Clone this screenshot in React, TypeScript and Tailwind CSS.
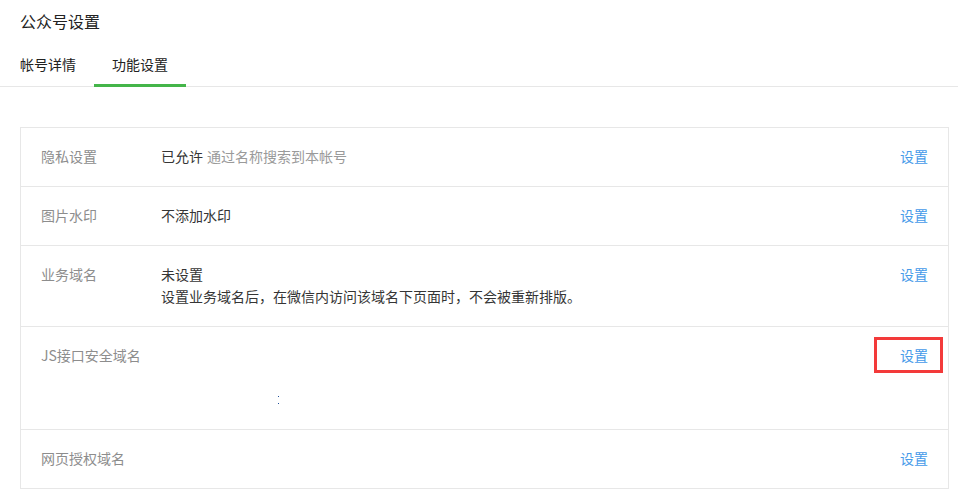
const rows = [
  { label: '隐私设置', key: 'privacy' },
  { label: '图片水印', key: 'watermark' },
  { label: '业务域名', key: 'domain' },
  { label: 'JS接口安全域名', key: 'js' },
  { label: '网页授权域名', key: 'oauth' },
];

function RowValue({ k }: { k: string }) {
  if (k === 'privacy') {
    return (
      <div>
        <span className="text-[#353535]">已允许</span>
        <span className="ml-1 text-[#9a9a9a]">通过名称搜索到本帐号</span>
      </div>
    );
  }
  if (k === 'watermark') {
    return <div className="text-[#353535]">不添加水印</div>;
  }
  if (k === 'domain') {
    return (
      <div className="text-[#353535]">
        <div>未设置</div>
        <div>设置业务域名后，在微信内访问该域名下页面时，不会被重新排版。</div>
      </div>
    );
  }
  if (k === 'js') {
    return (
      <div>
        <div className="h-[22px]" />
        <div className="ml-[117px] mt-[30px] h-px w-px bg-[#1f4f9a]" />
        <div className="ml-[117px] mt-[6px] mb-[6px] h-px w-px bg-[#1f4f9a]" />
      </div>
    );
  }
  return <div className="h-[22px]" />;
}

export default function App() {
  return (
    <div
      className="min-h-[497px] w-[958px] bg-white text-[14px] leading-[22px]"
      style={{ fontFamily: '"Microsoft YaHei", "Noto Sans CJK SC", sans-serif' }}
    >
      {/* page header */}
      <div className="px-[20px] pt-[10px] text-[16px] leading-[22px] text-[#222]">公众号设置</div>

      {/* tabs */}
      <div className="mt-[21px] flex border-b border-[#e7e7e7] pl-[2px]">
        <div className="px-[18px] pb-[11px] text-[#222]">帐号详情</div>
        <div className="-mb-px border-b-[3px] border-[#44b549] px-[18px] pb-[9px] text-[#222]">功能设置</div>
      </div>

      {/* settings list */}
      <div className="ml-[20px] mt-[40px] w-[929px] border border-[#e7e7e7]">
        {rows.map((row, i) => (
          <div
            key={row.key}
            className={`relative flex items-start px-[20px] pt-[17px] pb-[19px] ${i > 0 ? 'border-t border-[#e7e7e7]' : ''}`}
          >
            <div className="w-[120px] shrink-0 text-[#8d8d8d]">{row.label}</div>
            <div className="flex-1">
              <RowValue k={row.key} />
            </div>
            <a className="shrink-0 text-[#459ae9]">设置</a>
            {row.key === 'js' && (
              <div className="absolute right-[5px] top-[10px] h-[36px] w-[69px] border-[3px] border-[#f33a3a]" />
            )}
          </div>
        ))}
      </div>
    </div>
  );
}
